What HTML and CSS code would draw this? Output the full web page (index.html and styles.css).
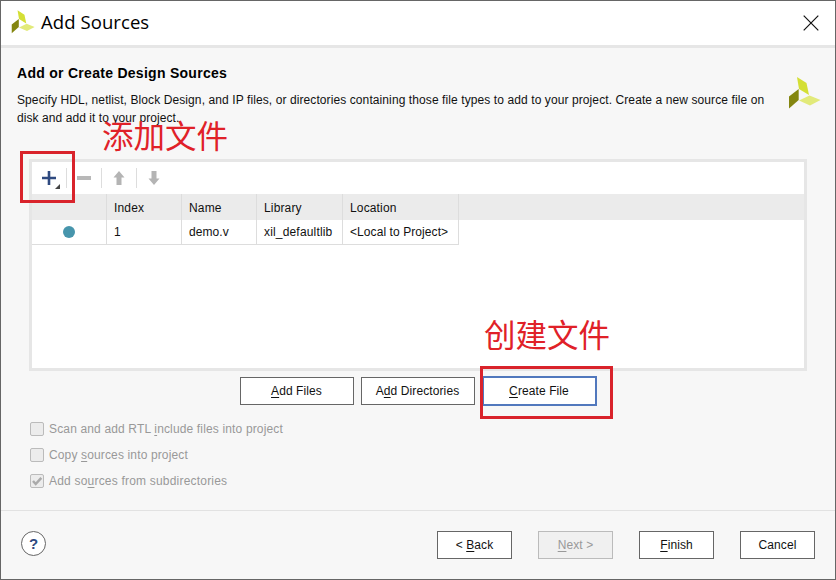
FILE: index.html
```html
<!DOCTYPE html>
<html lang="en">
<head>
<meta charset="utf-8">
<title>Add Sources</title>
<link rel="stylesheet" href="styles.css">
</head>
<body>
<div class="dialog">
  <header class="titlebar">
    <svg class="logo-small" width="24" height="24" viewBox="0 0 33 32"><path fill="#d4df35" d="M9 0l9.500 6L21 18l-10-6z"/><path fill="#848610" d="M1 19.500L10.700 12v11L1 31.500z"/><path fill="#e2ea7a" d="M11 23.500l10.500-5L32.500 23 22 28.500z"/></svg>
    <h1 class="title">Add Sources</h1>
    <svg class="close" width="16" height="16" viewBox="0 0 16 16"><path d="M.7.700l14.600 14.600M15.300.700L.700 15.300" stroke="#111" stroke-width="1.200"/></svg>
  </header>
  <main class="content">
    <section class="intro">
      <div class="intro-text">
        <h2 class="heading">Add or Create Design Sources</h2>
        <p class="desc"><span class="line l1">Specify HDL, netlist, Block Design, and IP files, or directories containing those file types to add to your project. Create a new source file on</span> <span class="line l2">disk and add it to your project.</span></p>
      </div>
      <svg class="logo" width="33" height="32" viewBox="0 0 33 32"><path fill="#d4df35" d="M9 0l9.500 6L21 18l-10-6z"/><path fill="#848610" d="M1 19.500L10.700 12v11L1 31.500z"/><path fill="#e2ea7a" d="M11 23.500l10.500-5L32.500 23 22 28.500z"/></svg>
    </section>
    <section class="panel">
      <div class="toolbar">
        <span class="tool"><svg width="34" height="32" viewBox="0 0 34 32"><path d="M10 16h14M17 9v14" stroke="#2f4a80" stroke-width="2.600"/><path d="M28 22v5h-5z" fill="#444"/></svg></span>
        <span class="tool"><svg width="34" height="32" viewBox="0 0 34 32"><path d="M10 16h14" stroke="#b8b8b8" stroke-width="4"/></svg></span>
        <span class="tool"><svg width="34" height="32" viewBox="0 0 34 32"><path d="M17 9l5.500 6.500h-3V23h-5v-7.500h-3z" fill="#b4b4b4"/></svg></span>
        <span class="tool"><svg width="34" height="32" viewBox="0 0 34 32"><path d="M17 23l5.500-6.500h-3V9h-5v7.500h-3z" fill="#b4b4b4"/></svg></span>
      </div>
      <div class="row head"><span></span><span>Index</span><span>Name</span><span>Library</span><span>Location</span><span class="rest"></span></div>
      <div class="row data"><span class="state"><i class="dot"></i></span><span>1</span><span>demo.v</span><span class="lib">xil_defaultlib</span><span>&lt;Local to Project&gt;</span></div>
    </section>
    <div class="actions">
      <button class="btn wide"><u>A</u>dd Files</button>
      <button class="btn wide">A<u>d</u>d Directories</button>
      <button class="btn wide focus"><u>C</u>reate File</button>
    </div>
    <div class="options">
      <label class="option"><i class="box"></i><span class="o1">Scan and add RTL <u>i</u>nclude files into project</span></label>
      <label class="option"><i class="box"></i><span class="o2">Copy <u>s</u>ources into project</span></label>
      <label class="option"><i class="box"><svg width="12" height="12" viewBox="0 0 12 12"><path d="M2 6l2.700 3L10.300 2.800" fill="none" stroke="#aaa" stroke-width="2.500"/></svg></i><span class="o3">Add so<u>u</u>rces from subdirectories</span></label>
    </div>
  </main>
  <footer class="footer">
    <span class="help">?</span>
    <div class="nav">
      <button class="btn">&lt; <u>B</u>ack</button>
      <button class="btn off"><u>N</u>ext &gt;</button>
      <button class="btn"><u>F</u>inish</button>
      <button class="btn">Cancel</button>
    </div>
  </footer>
  <div class="mark mark-add"></div>
  <div class="mark mark-create"></div>
  <div class="note note-add">添加文件</div>
  <div class="note note-create">创建文件</div>
</div>
</body>
</html>
```
FILE: styles.css
```css
* { box-sizing: border-box; }
body { margin: 0; font: 12px/18px "Liberation Sans", Arial, sans-serif; color: #111; }
h1, h2, p { margin: 0; }
u { text-decoration: underline; text-decoration-thickness: 1px; text-underline-offset: 2px; text-decoration-skip-ink: none; }
.dialog { position: relative; width: 836px; height: 580px; border: 1px solid #666; background: #f7f7f7; display: flex; flex-direction: column; }
.titlebar { height: 47px; border-bottom: 3px solid #e6e6e6; background: #fff; display: flex; align-items: center; padding: 0 16px 1px 10px; }
.logo-small { margin-top: -2px; }
.title { flex: 1; margin: -2px 0 0 6px; font: 18.500px/26px "Open Sans", "Noto Sans", sans-serif; letter-spacing: .08px; color: #000; }
.content { flex: 1; padding: 15px 28px 0; }
.intro { display: flex; justify-content: space-between; height: 96px; margin: 0 -14px 0 -12px; }
.heading { font-size: 14px; line-height: 20px; letter-spacing: .28px; color: #000; }
.desc { margin-top: 8px; }
.line { display: block; white-space: nowrap; }
.l1 { letter-spacing: .095px; }
.l2 { letter-spacing: .07px; }
.logo { margin: 14px 0 0; }
.panel { height: 212px; border: 3px solid #e6e6e6; background: #fff; }
.toolbar { height: 32px; display: flex; }
.tool { width: 35px; height: 32px; position: relative; }
.tool + .tool::before { content: ""; position: absolute; left: -1px; top: 6px; width: 1px; height: 20px; background: #ddd; }
.row { display: grid; grid-template-columns: 75px 75px 75px 86px 116px 1fr; letter-spacing: .08px; }
.row > span { border-right: 1px solid #ddd; padding-left: 7px; }
.row > .lib { letter-spacing: .17px; }
.head { height: 26px; line-height: 28px; letter-spacing: .15px; background: #ebebeb; }
.head > .rest { border: 0; }
.data { height: 25px; width: 427px; grid-template-columns: 75px 75px 75px 86px 116px; line-height: 24px; border-bottom: 1px solid #ddd; }
.row > .state { padding: 6px 0 0 31px; }
.dot { display: block; width: 12px; height: 12px; border-radius: 50%; background: #4795ac; }
.actions { display: flex; justify-content: center; gap: 7px; margin-top: 5px; height: 30px; align-items: center; }
.btn { width: 75px; height: 28px; padding: 0; border: 1px solid #666; background: #fff; font: inherit; line-height: 26px; letter-spacing: .1px; color: #111; }
.btn.wide { width: 114px; }
.btn.wide.focus { width: 115px; height: 30px; border: 2px solid #5178bd; }
.btn.off { border-color: #bbb; background: #f0f0f0; color: #999; }
.options { margin-top: 14px; color: #999; }
.option { display: flex; align-items: center; height: 18px; margin-bottom: 8px; }
.o1 { letter-spacing: .15px; }
.o2 { letter-spacing: .14px; }
.o3 { letter-spacing: .2px; }
.box { width: 14px; height: 14px; margin-right: 5px; margin-left: 1px; border: 1px solid #bbb; border-radius: 2px; background: #ececec; display: flex; }
.footer { height: 69px; border-top: 1px solid #e2e2e2; display: flex; align-items: center; justify-content: space-between; padding: 0 20px; }
.help { width: 25px; height: 25px; margin-top: -3px; border: 1px solid #666; border-radius: 50%; background: #fff; color: #2f4a80; font-size: 15px; font-weight: bold; line-height: 24px; text-align: center; }
.nav { display: flex; gap: 26px; }
.mark { position: absolute; border: 3px solid #d9232b; }
.mark-add { left: 19px; top: 150px; width: 55px; height: 52px; }
.mark-create { left: 479px; top: 365px; width: 133px; height: 53px; }
.note { position: absolute; font: 400 31.500px/40px "Noto Sans CJK SC", sans-serif; color: #e02128; white-space: nowrap; }
.note-add { left: 101px; top: 113px; }
.note-create { left: 483px; top: 312px; }
```
